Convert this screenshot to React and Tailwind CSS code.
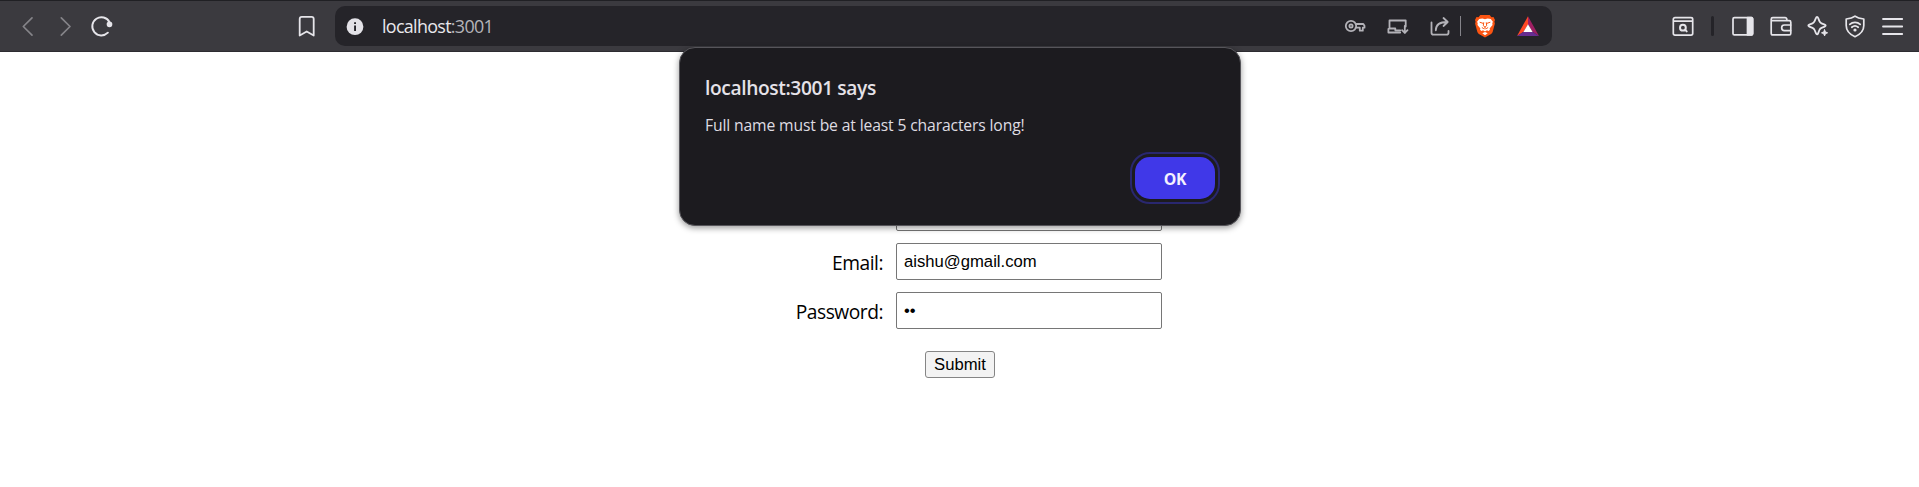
import React from "react";

function Icon({ className = "", children, stroke = "#e6e5ea", width = 1.7 }) {
  return (
    <svg
      viewBox="0 0 24 24"
      className={"h-6 w-6 shrink-0 " + className}
      fill="none"
      stroke={stroke}
      strokeWidth={width}
      strokeLinecap="round"
      strokeLinejoin="round"
      aria-hidden="true"
    >
      {children}
    </svg>
  );
}

function BraveLogo() {
  return (
    <Icon className="ml-3" stroke="none">
      <path fill="#fb5412" d="M7.3 1h9.4l1.8 2.2 2-.1 1.5 3-.6 1.7.5 1.7-2.2 8.2c-.3 1-.8 1.7-1.6 2.3L12 23.6 5.9 20c-.8-.6-1.3-1.3-1.6-2.3L2.1 9.500l.5-1.700L2 6.100l1.500-3 2 .1z" />
      <path fill="#fff" d="M12 5.200l2.600-.6 3.200.4 2.100 2.700-.6 1.500.2 1.900-2.900 3.300.4 1.400-1.500 1.300-1.500-.8L12 17.500l-2-1.200-1.500.8L7 15.800l.4-1.400-2.900-3.300.2-1.900-.6-1.500L6.200 5l3.200-.4zM12 17.900l2.700 1.400-2.700 2-2.700-2z" />
      <path stroke="#fb5412" strokeWidth="1" d="M7 8.300l3.200 1.100M17 8.300l-3.200 1.100M10.700 8.700l-.4 3 1.700 1.500 1.700-1.500-.4-3M12 13.200v1.800M9.200 13.700l1.300.8M14.800 13.700l-1.300.8" />
    </Icon>
  );
}

function RewardsLogo() {
  return (
    <Icon className="ml-[19px]" stroke="none">
      <path fill="#ff4724" d="M12 2.200v8.300L7.600 17.800 1 22z" />
      <path fill="#9e1f63" d="M12 2.200L23 22l-6.600-4.200L12 10.500z" />
      <path fill="#662d91" d="M1 22l6.600-4.200h8.800L23 22z" />
      <path fill="#fff" d="M12 10.300l4.600 7.600H7.400z" />
    </Icon>
  );
}

function AddressBar() {
  return (
    <div className="ml-4 flex h-10 w-[1217px] shrink-0 items-center rounded-[10px] bg-[#252429] pl-2">
      <Icon stroke="none">
        <circle cx="12" cy="12.700" r="8.400" fill="#e3e2e7" />
        <path fill="#252429" d="M11.100 8.200h1.900v1.900h-1.900zM11.100 11.600h1.900v5.500h-1.900z" />
      </Icon>
      <span className="ml-[15px] whitespace-nowrap pb-px font-['Open_Sans',sans-serif] text-[17.9px] leading-6 tracking-[-0.68px] text-[#e9e8ed]">
        localhost<span className="text-[#b5b4ba]">:3001</span>
      </span>
      <div className="ml-auto flex items-center pr-3">
        <Icon stroke="#b3b2b8" width={1.8}>
          <circle cx="8" cy="12" r="5.200" />
          <circle cx="8" cy="12" r="1.600" />
          <path d="M12.800 10h7.500l1.200 1.700v2h-1.700v3h-3v-3h-4.200" />
        </Icon>
        <Icon className="ml-[19px]" stroke="#b3b2b8" width={1.8}>
          <path d="M3.500 14.500V6.500h16.200v6M2.400 18.500h11.800M3.500 14.500h5.800v1.800h5M2.400 15v3.500" />
          <path d="M18.800 12v6.500M16.100 16.200l2.700 2.800 2.700-2.800" />
        </Icon>
        <Icon className="ml-[18px]" stroke="#b3b2b8" width={1.8}>
          <path d="M3.500 8.500v10.300c0 1.200.7 1.900 1.900 1.900h13.200c1.200 0 1.900-.7 1.900-1.900v-1.900" />
          <path d="M7.800 16.300c0-5.500 3.500-8.300 11.500-8.300M15.500 4l4.200 4-4.200 4" />
        </Icon>
        <div className="ml-2 h-5 w-px bg-[#85848a]" />
        <BraveLogo />
        <RewardsLogo />
      </div>
    </div>
  );
}

function Toolbar() {
  return (
    <header className="flex h-[52px] items-center border-b border-t border-b-[#2d2c31] border-t-[#202024] bg-[#3b3a3f] pl-4">
      <Icon stroke="#858489">
        <path d="M16 3.800L7.300 12.500 16 21.200" />
      </Icon>
      <Icon className="ml-[14px]" stroke="#858489">
        <path d="M7.300 3.800l8.700 8.700-8.700 8.700" />
      </Icon>
      <Icon className="ml-[12px]" width={1.9}>
        <path d="M17.900 18.700A9.100 9.100 0 1 1 19.500 8.200" />
        <circle cx="19.500" cy="10.300" r="1.900" fill="#e6e5ea" />
      </Icon>
      <Icon className="ml-[181px]" width={1.8}>
        <path d="M4.700 21.500V5c0-1.400.7-2.100 2.100-2.100h9.800c1.400 0 2.100.7 2.100 2.100v16.500L11.700 17.500z" />
      </Icon>
      <AddressBar />
      <div className="ml-[119px] flex items-center">
        <Icon>
          <path d="M4 3.600h16c1 0 1.700.6 1.700 1.600v14.300c0 1-.6 1.600-1.700 1.600H4c-1.100 0-1.700-.6-1.700-1.600V5.200c0-1 .7-1.600 1.700-1.600zM2.300 7.200h19.400" />
          <circle cx="11.900" cy="13.700" r="2.900" strokeWidth="2" />
          <path strokeWidth="2" d="M14.200 15.900l1.500 1.500" />
        </Icon>
        <div className="ml-4 h-5 w-[3px] rounded-sm bg-[#242328]" />
        <Icon className="ml-[17px]">
          <path d="M3.400 3.700h16.800c.9 0 1.400.5 1.400 1.400v14.400c0 .9-.5 1.400-1.400 1.400H3.400c-.9 0-1.400-.5-1.400-1.400V5.100c0-.9.5-1.400 1.400-1.400z" />
          <path fill="#e6e5ea" d="M16.500 3.700h4.300l.8.800v15.600l-.8.800h-4.300z" />
        </Icon>
        <Icon className="ml-[14px]">
          <path d="M17.800 6.500V5.300c0-1-.7-1.600-1.700-1.600H3.800c-1 0-1.600.6-1.600 1.600v13.900c0 1 .6 1.700 1.600 1.700h16.500c.9 0 1.500-.7 1.500-1.700V8.300c0-1-.6-1.600-1.500-1.600H2.800" />
          <path d="M21.600 11h-6.200c-1.800 0-2.700.9-2.700 2.500v.6c0 1.600.9 2.500 2.700 2.500h6.200" />
        </Icon>
        <Icon className="ml-[13px]" width={1.8}>
          <path d="M11 2.800c.6 0 .9.500 1.100 1.100l1.300 3.300c.5 1.200.9 1.600 2.100 2.100l3.200 1.300c1.300.5 1.300 1.500 0 2l-3.200 1.300c-1.200.5-1.600.9-2.100 2.100L12.100 19.300c-.5 1.300-1.600 1.300-2.100 0L8.600 16c-.5-1.200-.9-1.600-2.100-2.100l-3.200-1.300c-1.300-.5-1.300-1.500 0-2l3.200-1.300c1.200-.5 1.600-.9 2.100-2.100L10 3.900c.2-.6.500-1.100 1-1.100z" />
          <path fill="#e6e5ea" strokeWidth="1" d="M18.600 15.800l.8 2.100 2.200.9-2.200.9-.8 2.200-.9-2.200-2.200-.9 2.200-.9z" />
        </Icon>
        <Icon className="ml-[13px]">
          <path d="M12 2.200c2.300 1.800 5.100 2.500 8.800 2.800v6.500c0 5.500-3.500 8.900-8.800 11.200-5.300-2.300-8.800-5.700-8.800-11.200V5c3.700-.3 6.500-1 8.800-2.800z" />
          <path strokeWidth="1.800" d="M6.800 10.300c2.900-2.700 7.500-2.700 10.400 0M8.800 13.200c1.900-1.600 4.500-1.600 6.400 0" />
          <circle cx="12" cy="16" r="1.600" fill="#e6e5ea" stroke="none" />
        </Icon>
        <Icon className="ml-[14px]" width={1.8}>
          <path d="M2 5h19.200M2 12.500h19.200M2 20h19.200" />
        </Icon>
      </div>
    </header>
  );
}

function Field({ label, type, value }) {
  return (
    <label className="grid grid-cols-[129px_266px] items-center gap-[13px]">
      <span className="pt-0.5 text-right font-['Open_Sans',sans-serif] text-[19.2px] leading-7 tracking-[-0.48px] text-black">
        {label}
      </span>
      <input
        type={type}
        defaultValue={value}
        className="h-[37px] w-full rounded-[2px] border border-[#767676] bg-white px-[7px] font-['Liberation_Sans',sans-serif] text-[16.67px] text-black outline-none"
      />
    </label>
  );
}

function AlertDialog() {
  return (
    <div
      role="alertdialog"
      className="absolute left-[679px] top-[47px] flex h-[179px] w-[562px] flex-col rounded-[16px] border border-[#56555a] bg-[#1c1b1f] pl-[25px] pr-[25px] font-['Open_Sans',sans-serif] shadow-[0_2px_6px_rgba(0,0,0,0.4)]"
    >
      <h1 className="mt-[26px] whitespace-nowrap text-[19.2px] font-semibold leading-7 tracking-[-0.38px] text-[#e5e2e8]">
        localhost:3001 says
      </h1>
      <p className="mt-[11px] whitespace-nowrap text-[15.7px] leading-6 tracking-[-0.14px] text-[#dfdce2]">
        Full name must be at least 5 characters long!
      </p>
      <button className="mt-5 h-[42px] w-20 self-end rounded-[15px] bg-[#4038e8] pt-[3px] text-[15.8px] font-bold tracking-[-0.4px] text-[#f3f1ff] outline-2 outline-offset-[3px] outline-[#29276f]">
        OK
      </button>
    </div>
  );
}

export default function App() {
  return (
    <div className="relative h-[487px] w-[1919px] overflow-hidden bg-white">
      <Toolbar />
      <form className="flex w-full flex-col items-center gap-3 pl-[1px] pt-[142px]">
        <div className="mr-1 flex flex-col gap-3">
          <Field label="Full Name:" type="text" value="" />
          <Field label="Email:" type="email" value="aishu@gmail.com" />
          <Field label="Password:" type="password" value="22" />
        </div>
        <button
          type="button"
          className="mt-[10px] h-[27px] w-[70px] rounded-[3px] border border-[#858585] bg-[#f3f3f3] pt-px font-['Liberation_Sans',sans-serif] text-[16.67px] leading-none text-black"
        >
          Submit
        </button>
      </form>
      <AlertDialog />
    </div>
  );
}
